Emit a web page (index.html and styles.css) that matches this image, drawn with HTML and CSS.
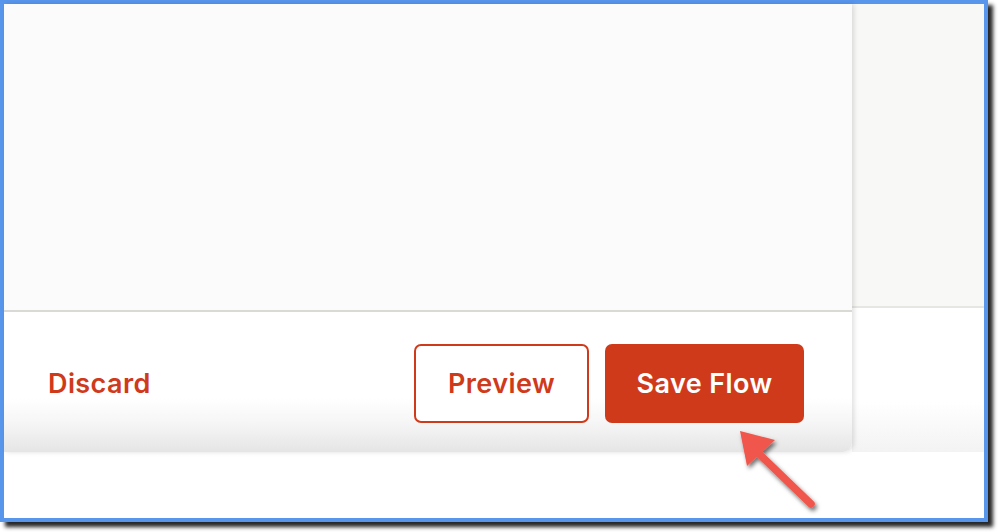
FILE: index.html
```html
<!DOCTYPE html>
<html>
<head>
<meta charset="utf-8">
<link rel="stylesheet" href="styles.css">
</head>
<body>
<div class="frame">
  <div class="stage">
    <div class="panel">
      <div class="panel-body"></div>
      <div class="panel-footer">
        <a class="link-btn">Discard</a>
        <div class="actions">
          <button class="btn btn-outline">Preview</button>
          <button class="btn btn-solid">Save Flow</button>
        </div>
      </div>
    </div>
    <div class="side">
      <div class="side-top"></div>
      <div class="side-bottom"></div>
    </div>
  </div>
  <div class="below"></div>
  <svg class="arrow" width="120" height="110" viewBox="0 0 120 110">
    <defs>
      <filter id="sh" x="-30%" y="-30%" width="160%" height="160%">
        <feDropShadow dx="2" dy="3" stdDeviation="2" flood-color="#000" flood-opacity="0.55"/>
      </filter>
    </defs>
    <g filter="url(#sh)">
      <line x1="101" y1="84" x2="45" y2="30" stroke="#F0574B" stroke-width="7.5" stroke-linecap="round"/>
      <polygon points="30,11 65,20 37,46" fill="#F0574B"/>
    </g>
  </svg>
</div>
</body>
</html>
```
FILE: styles.css
```css
* { box-sizing: border-box; }
html, body { margin: 0; padding: 0; background: #ffffff; }
body { width: 998px; height: 532px; overflow: hidden; font-family: Inter, "Noto Sans", sans-serif; }

.frame {
  position: relative;
  width: 988px;
  height: 522px;
  border: 4px solid #5896EC;
  background: #ffffff;
  box-shadow: 5px 5px 4px rgba(0,0,0,0.85);
  display: flex;
  flex-direction: column;
}

.stage {
  display: flex;
  height: 448px;
  flex: none;
}

.panel {
  width: 848px;
  flex: none;
  display: flex;
  flex-direction: column;
  border-bottom-right-radius: 9px;
  box-shadow: 2px 0 5px rgba(0,0,0,0.13);
  position: relative;
  z-index: 1;
  overflow: hidden;
}

.panel-body {
  height: 308px;
  flex: none;
  background: #FBFBFB;
  border-bottom: 2px solid #D9D9D5;
}

.panel-footer {
  flex: 1;
  display: flex;
  align-items: center;
  justify-content: space-between;
  padding: 2px 48px 0 44px;
  background: linear-gradient(to bottom, #ffffff 0px, #ffffff 86px, #F5F5F5 112px, #E5E5E5 140px);
}

.link-btn {
  color: #CF3A1B;
  font-size: 27px;
  font-weight: 600;
  letter-spacing: 0.4px;
}

.actions {
  display: flex;
  gap: 16px;
}

.btn {
  font-family: Inter, "Noto Sans", sans-serif;
  font-size: 27px;
  font-weight: 600;
  height: 79px;
  border-radius: 7px;
  padding: 0;
  letter-spacing: 0.4px;
}

.btn-outline {
  width: 175px;
  background: #ffffff;
  color: #CF3A1B;
  border: 2px solid #CF3A1B;
}

.btn-solid {
  width: 199px;
  background: #CF3A1B;
  color: #ffffff;
  border: none;
}

.side {
  flex: 1;
  display: flex;
  flex-direction: column;
}

.side-top {
  height: 304px;
  flex: none;
  background: #F8F8F7;
  border-bottom: 2px solid #E6E6E3;
}

.side-bottom {
  flex: 1;
  background: linear-gradient(to bottom, #ffffff 0px, #ffffff 65%, #F3F3F3 100%);
}

.below {
  flex: 1;
  background: #ffffff;
}

.arrow {
  position: absolute;
  left: 706px;
  top: 416px;
  z-index: 5;
  overflow: visible;
}
```
